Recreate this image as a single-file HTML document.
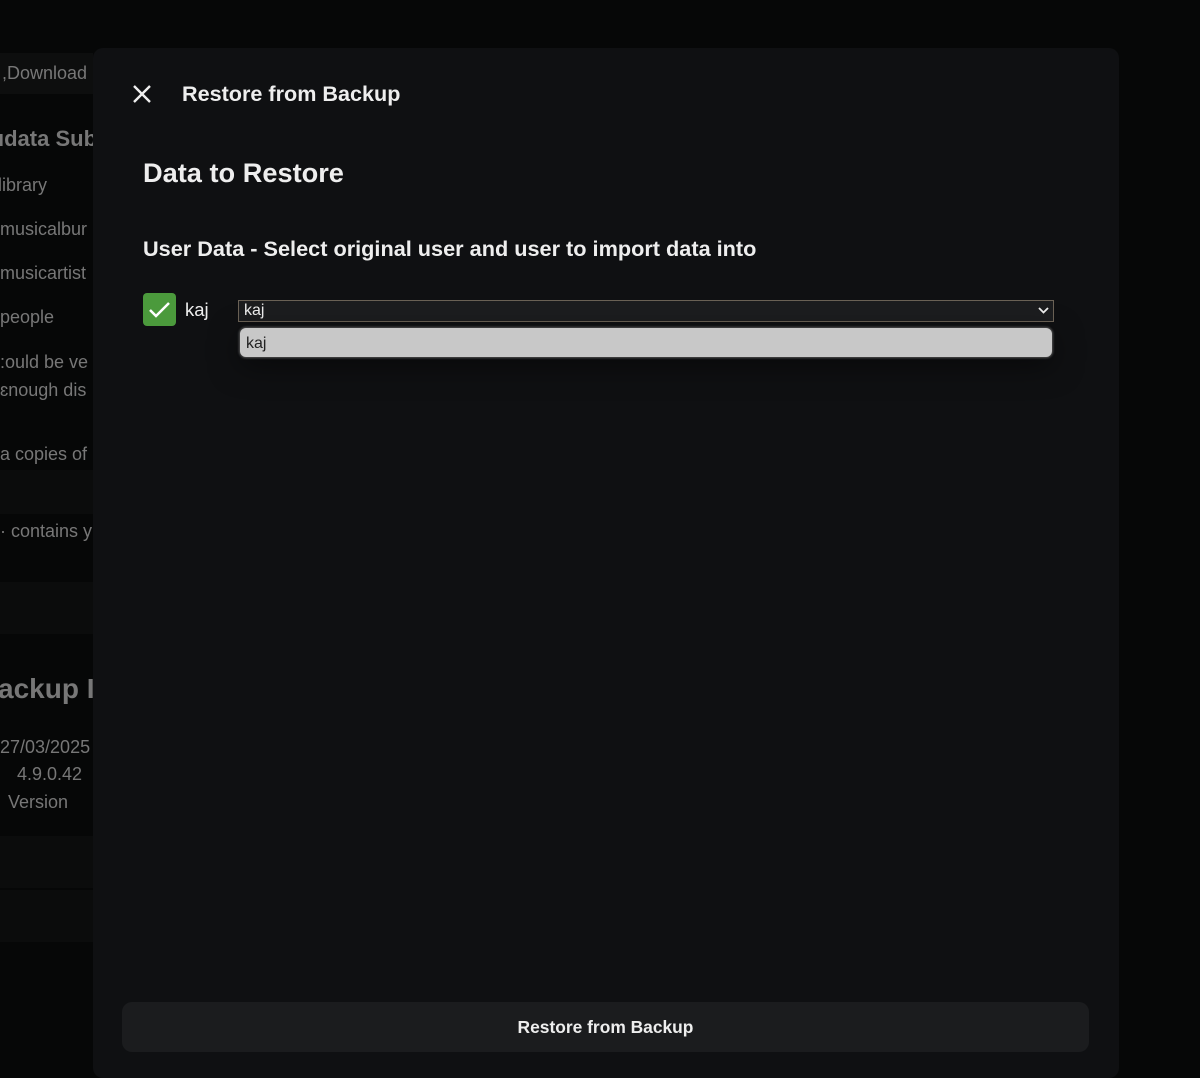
<!DOCTYPE html>
<html><head><style>
body{margin:0;width:1200px;height:1071px;background:#060707;overflow:hidden;font-family:"Liberation Sans",sans-serif;position:relative}
.bg{position:absolute;left:0;color:#777;font-size:18px;white-space:nowrap}
.blk{position:absolute;left:0;width:93px;background:#0b0c0c}
.modal{position:absolute;left:93px;top:48px;width:1026px;height:1030px;background:#0f1012;border-radius:10px}
.t{position:absolute;color:#eee;font-weight:bold;white-space:nowrap}
</style></head><body>
<div class="blk" style="top:53px;height:41px;background:#0d0e0e"></div>
<div class="blk" style="top:470px;height:44px"></div>
<div class="blk" style="top:582px;height:52px"></div>
<div class="blk" style="top:836px;height:52px"></div>
<div class="blk" style="top:890px;height:52px"></div>
<div class="bg" style="top:63px;left:2px">,Download</div>
<div class="bg" style="top:126px;font-size:22px;font-weight:bold;left:-2px">ıdata Sub</div>
<div class="bg" style="top:175px;left:-2px">library</div>
<div class="bg" style="top:219px">musicalbur</div>
<div class="bg" style="top:263px">musicartist</div>
<div class="bg" style="top:307px">people</div>
<div class="bg" style="top:352px">:ould be ve</div>
<div class="bg" style="top:380px">ɛnough dis</div>
<div class="bg" style="top:444px">a copies of</div>
<div class="bg" style="top:521px">· contains y</div>
<div class="bg" style="top:673px;font-size:28px;font-weight:bold;left:-2px">ackup In</div>
<div class="bg" style="top:737px">27/03/2025</div>
<div class="bg" style="top:764px;left:17px">4.9.0.42</div>
<div class="bg" style="top:792px;left:8px">Version</div>
<div class="modal"></div>
<svg style="position:absolute;left:132px;top:84px" width="20" height="20" viewBox="0 0 20 20"><path d="M2 2L18 18M18 2L2 18" stroke="#eee" stroke-width="2.4"/></svg>
<div class="t" style="left:182px;top:81px;font-size:21.6px">Restore from Backup</div>
<div class="t" style="left:143px;top:157px;font-size:27.2px">Data to Restore</div>
<div class="t" style="left:143px;top:236px;font-size:21.7px">User Data - Select original user and user to import data into</div>
<div style="position:absolute;left:143px;top:293px;width:33px;height:33px;background:#4b9a3c;border-radius:4px"></div>
<svg style="position:absolute;left:143px;top:293px" width="33" height="33" viewBox="0 0 33 33"><path d="M7 17l6 6 13-13" stroke="#fff" stroke-width="2.5" fill="none"/></svg>
<div style="position:absolute;left:185px;top:299px;color:#eee;font-size:18.5px">kaj</div>
<div style="position:absolute;left:238px;top:300px;height:20px;border:1px solid #6b6256;background:#1c1d1f;color:#eee;font-size:16px;line-height:20px;padding-left:5px;width:809px">kaj</div>
<svg style="position:absolute;left:1037px;top:305px" width="13" height="10" viewBox="0 0 13 10"><path d="M2 3l4.5 4.5L11 3" stroke="#eee" stroke-width="1.8" fill="none"/></svg>
<div style="position:absolute;left:240px;top:328px;width:812px;height:29px;background:#c8c8c8;border-radius:6px;box-shadow:0 0 2px 1px #555, 0 8px 30px rgba(0,0,0,.5);color:#222;font-size:16px;line-height:31px;padding-left:6px;box-sizing:border-box">kaj</div>
<div style="position:absolute;left:122px;top:1002px;width:967px;height:50px;background:#1b1c1e;border-radius:10px;color:#eee;font-weight:bold;font-size:17.4px;text-align:center;line-height:50px">Restore from Backup</div>
</body></html>
